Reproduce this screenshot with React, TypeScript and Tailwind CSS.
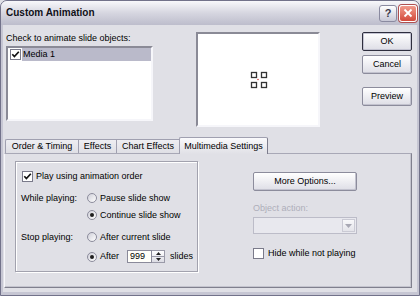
import React from "react";

const CheckMark = () => (
  <svg width="9" height="9" viewBox="0 0 9 9">
    <path d="M1.3 4.3 L3.4 6.6 L7.8 1.8" fill="none" stroke="#111" strokeWidth="1.7" />
  </svg>
);

function CheckBox({ checked }: { checked: boolean }) {
  return (
    <div className="w-[11px] h-[11px] border border-[#7a7a8a] bg-white flex items-center justify-center shrink-0">
      {checked && <CheckMark />}
    </div>
  );
}

function Radio({ checked }: { checked: boolean }) {
  return (
    <div className="w-[10px] h-[10px] rounded-full border border-[#8c8c9c] bg-gradient-to-br from-[#cfcfd8] to-white flex items-center justify-center shrink-0">
      {checked && <div className="w-[4px] h-[4px] rounded-full bg-[#1e1e1e]" />}
    </div>
  );
}

function Btn({
  children,
  def,
  className,
}: {
  children: React.ReactNode;
  def?: boolean;
  className: string;
}) {
  return (
    <div
      className={`flex items-center justify-center rounded-[2px] border ${
        def
          ? "border-[#2e2e3e] shadow-[inset_0_0_0_1px_#c4c4d2]"
          : "border-[#8c8c9c] shadow-[inset_-1px_-1px_0_#c2c2ce]"
      } bg-gradient-to-b from-white to-[#dedee6] ${className}`}
    >
      {children}
    </div>
  );
}

export default function App() {
  return (
    <div className="w-[420px] h-[296px] overflow-hidden bg-[#e0e0e6]">
      <div className="w-[420px] h-[296px] flex flex-col rounded-t-[7px] border border-[#72728a] bg-[#c6c6d3] font-['Liberation_Sans',Arial,sans-serif] text-[9px] leading-[11px] text-black">
        {/* Title bar */}
        <div className="h-[24px] shrink-0 flex items-center rounded-t-[6px] bg-gradient-to-b from-[#f8f8fb] via-[#d6d6e0] to-[#bdbdcc] pl-[5px] pr-[2px]">
          <div className="flex-1 font-bold text-[10px] leading-[12px] text-[#101018]">
            Custom Animation
          </div>
          <div className="flex gap-[2px]">
            <div className="w-[18px] h-[17px] rounded-[3px] border border-[#8a8aa0] bg-gradient-to-b from-white to-[#c8c8d6] flex items-center justify-center font-bold text-[11px] text-[#3a3a4c]">
              ?
            </div>
            <div className="w-[18px] h-[17px] rounded-[3px] border border-white bg-gradient-to-b from-[#f09a8c] to-[#d2483a] flex items-center justify-center shadow-[0_0_0_1px_#b05050]">
              <svg width="10" height="10" viewBox="0 0 10 10">
                <path d="M1.5 1.5 L8.5 8.5 M8.5 1.5 L1.5 8.5" stroke="white" strokeWidth="1.8" />
              </svg>
            </div>
          </div>
        </div>

        {/* Body */}
        <div className="flex-1 mx-[2px] mb-[3px] bg-[#e0e0e6] flex flex-col">
          {/* Top row */}
          <div className="flex items-start mt-[7px] pl-[3px]">
            <div className="w-[147px] flex flex-col">
              <div className="mt-[1px] h-[11px]">Check to animate slide objects:</div>
              <div className="mt-[2px] h-[75px] bg-white border-2 border-t-[#8a8a96] border-l-[#8a8a96] border-r-[#f6f6fa] border-b-[#f6f6fa] pl-[2px]">
                <div className="flex items-center h-[13px]">
                  <CheckBox checked />
                  <div className="flex-1 h-[13px] ml-[1px] bg-[#babaca] flex items-center pl-[1px]">
                    Media 1
                  </div>
                </div>
              </div>
            </div>
            <div className="ml-[43px] w-[124px] h-[95px] bg-white border-2 border-t-[#8a8a96] border-l-[#8a8a96] border-r-[#f6f6fa] border-b-[#f6f6fa] flex items-center justify-center">
              <svg width="18" height="18" viewBox="0 0 18 18" className="ml-[2px] mt-[1px]">
                <g fill="none" stroke="#333" strokeWidth="1.3">
                  <rect x="1.5" y="1.5" width="5" height="5" />
                  <rect x="11.5" y="1.5" width="5" height="5" />
                  <rect x="1.5" y="11.5" width="5" height="5" />
                  <rect x="11.5" y="11.5" width="5" height="5" />
                </g>
                <circle cx="8" cy="8.5" r="0.8" fill="#d04040" />
              </svg>
            </div>
            <div className="ml-[42px] w-[50px] flex flex-col">
              <Btn def className="h-[19px]">OK</Btn>
              <Btn className="h-[19px] mt-[4px]">Cancel</Btn>
              <Btn className="h-[19px] mt-[13px]">Preview</Btn>
            </div>
          </div>

          {/* Tabs */}
          <div className="mt-[10px] ml-[1px] h-[16px] flex items-end pl-[1px] relative z-10">
            <div className="w-[73px] h-[14px] flex items-center justify-center border-t border-l border-[#a0a0b0] rounded-tl-[2px] bg-gradient-to-b from-[#eeeef2] to-[#dfdfe5]">
              Order &amp; Timing
            </div>
            <div className="w-[38px] h-[14px] flex items-center justify-center border-t border-l border-[#a0a0b0] bg-gradient-to-b from-[#eeeef2] to-[#dfdfe5]">
              Effects
            </div>
            <div className="w-[63px] h-[14px] flex items-center justify-center border-t border-l border-[#a0a0b0] bg-gradient-to-b from-[#eeeef2] to-[#dfdfe5]">
              Chart Effects
            </div>
            <div className="w-[89px] h-[17px] -mb-px flex items-start justify-center pt-[3px] border-t border-l border-r border-t-[#a0a0b0] border-l-[#a0a0b0] border-r-[#7c7c8c] rounded-t-[2px] bg-gradient-to-b from-[#fafafc] to-[#e0e0e6]">
              Multimedia Settings
            </div>
          </div>

          {/* Panel */}
          <div className="ml-[1px] w-[408px] h-[135px] border border-t-[#a8a8b6] border-l-[#f6f6fa] border-r-[#80808e] border-b-[#80808e] shadow-[inset_-1px_-1px_0_#c4c4ce] bg-[#e0e0e6] flex items-start pl-[10px] pt-[7px]">
            {/* Group box */}
            <div className="w-[183px] h-[111px] border border-[#a2a2ae] shadow-[inset_1px_1px_0_#fff,1px_1px_0_#fff] flex flex-col">
              <div className="mt-[8px] h-[12px] flex items-center pl-[6px]">
                <CheckBox checked />
                <span className="ml-[3px]">Play using animation order</span>
              </div>
              <div className="mt-[10px] h-[12px] flex items-center pl-[5px]">
                <div className="w-[66px]">While playing:</div>
                <Radio checked={false} />
                <span className="ml-[3px]">Pause slide show</span>
              </div>
              <div className="mt-[5px] h-[12px] flex items-center pl-[71px]">
                <Radio checked />
                <span className="ml-[3px]">Continue slide show</span>
              </div>
              <div className="mt-[10px] h-[12px] flex items-center pl-[5px]">
                <div className="w-[66px]">Stop playing:</div>
                <Radio checked={false} />
                <span className="ml-[3px]">After current slide</span>
              </div>
              <div className="mt-[7px] h-[13px] flex items-center pl-[71px]">
                <Radio checked />
                <span className="ml-[3px] w-[20px]">After</span>
                <div className="ml-[7px] w-[25px] h-[13px] bg-[#fffffa] border border-[#8a8a9a] flex items-center pl-[2px]">
                  999
                </div>
                <div className="w-[13px] h-[13px] flex flex-col border border-l-0 border-[#9a9aa8] bg-gradient-to-b from-white to-[#dcdce4]">
                  <div className="flex-1 flex items-center justify-center border-b border-[#9a9aa8]">
                    <svg width="5" height="3" viewBox="0 0 5 3">
                      <path d="M0 3 L2.5 0 L5 3 Z" fill="#222" />
                    </svg>
                  </div>
                  <div className="flex-1 flex items-center justify-center">
                    <svg width="5" height="3" viewBox="0 0 5 3">
                      <path d="M0 0 L2.5 3 L5 0 Z" fill="#222" />
                    </svg>
                  </div>
                </div>
                <span className="ml-[5px]">slides</span>
              </div>
            </div>

            {/* Right column */}
            <div className="ml-[55px] mt-[11px] w-[104px] flex flex-col">
              <Btn className="h-[19px]">More Options...</Btn>
              <div className="mt-[12px] h-[11px] text-[#aeaeba]">Object action:</div>
              <div className="mt-[3px] h-[17px] border border-[#bcbcc8] bg-[#e8e8ee] flex justify-end items-center pr-[1px]">
                <div className="w-[13px] h-[13px] border border-[#cacad4] bg-gradient-to-b from-[#f8f8fa] to-[#e4e4ea] flex items-center justify-center">
                  <svg width="7" height="4" viewBox="0 0 7 4">
                    <path d="M0 0 L3.5 4 L7 0 Z" fill="#a8a8b4" />
                  </svg>
                </div>
              </div>
              <div className="mt-[14px] h-[11px] flex items-center">
                <CheckBox checked={false} />
                <span className="ml-[4px]">Hide while not playing</span>
              </div>
            </div>
          </div>
        </div>
      </div>
    </div>
  );
}
